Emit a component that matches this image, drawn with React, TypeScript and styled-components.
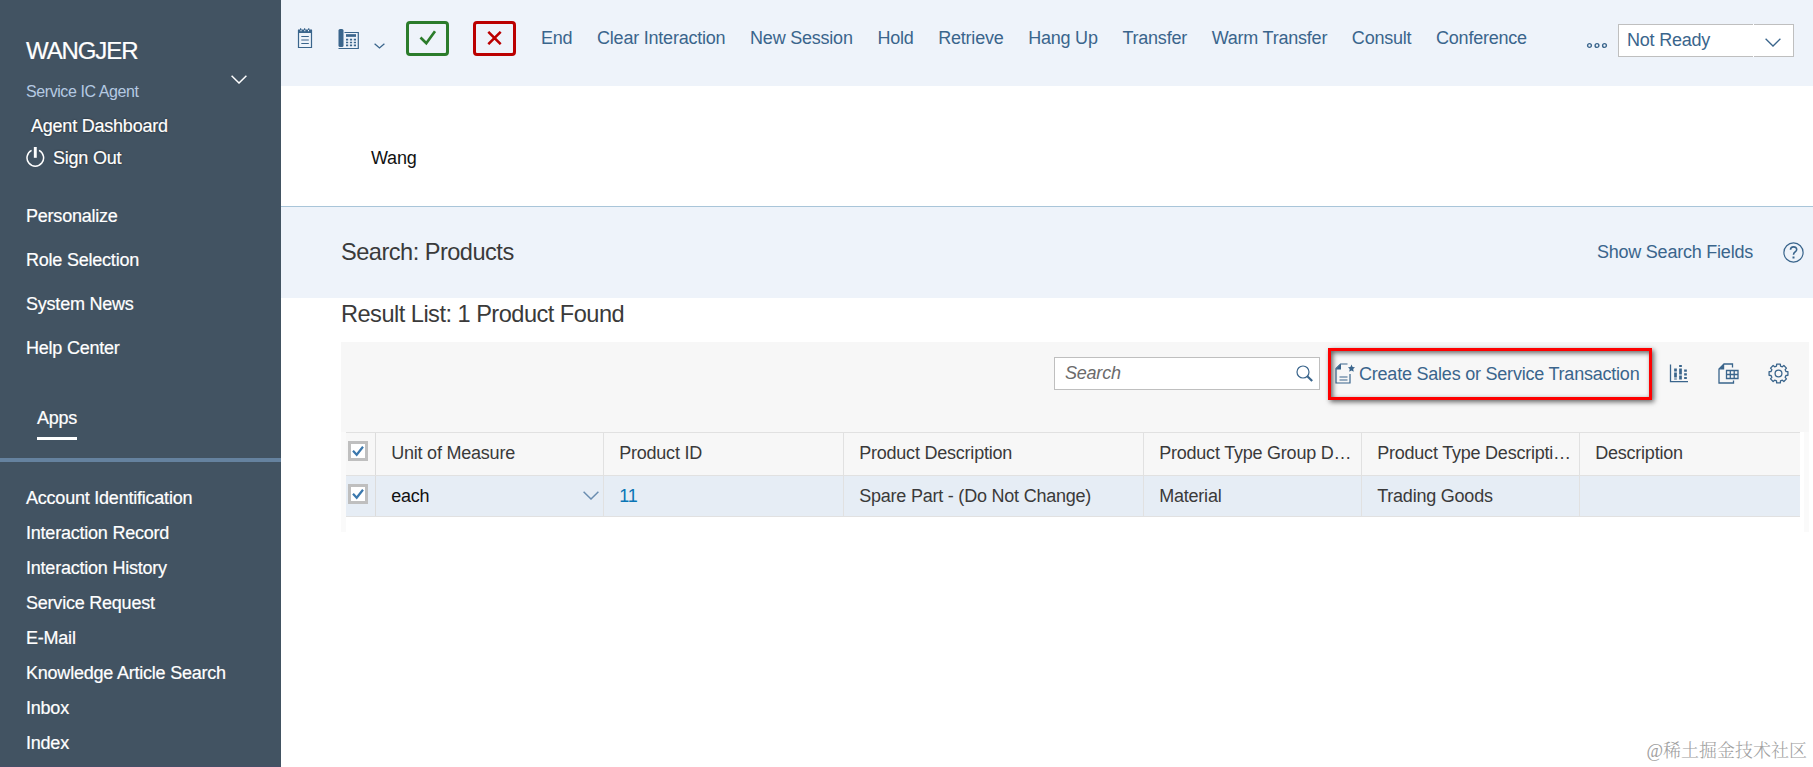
import React from "react";
import styled, { createGlobalStyle } from "styled-components";

const GlobalStyle = createGlobalStyle`
  * { box-sizing: border-box; }
  body {
    margin: 0;
    overflow: hidden;
    background: #fff;
    color: #3a3a3a;
    font: 18px "Liberation Sans", Arial, sans-serif;
    letter-spacing: -0.22px;
  }
  svg { display: block; flex: none; }
`;

const Page = styled.div`
  display: flex;
  width: 1813px;
  height: 767px;
  overflow: hidden;
`;

/* ---------- Sidebar ---------- */

const Sidebar = styled.aside`
  flex: none;
  width: 281px;
  height: 767px;
  display: flex;
  flex-direction: column;
  background: #425362;
  color: #fff;
  white-space: nowrap;
  -webkit-text-stroke: 0.2px currentColor;
  border-bottom: 1px solid #454f68;
`;

const Profile = styled.div`
  display: flex;
  justify-content: space-between;
  padding: 35px 34px 0 26px;
  height: 108px;
`;

const UserName = styled.div`
  font-size: 24px;
  letter-spacing: -1.1px;
  line-height: 31px;
  margin-bottom: 14px;
`;

const RoleName = styled.div`
  font-size: 16px;
  letter-spacing: -0.42px;
  line-height: 23px;
  color: #b5cae2;
  -webkit-text-stroke: 0;
`;

const ProfileToggle = styled.div`
  padding-top: 40px;
`;

const AccountLink = styled.a<{ $indent: number; $height: number }>`
  display: flex;
  align-items: center;
  gap: 7px;
  height: ${(p) => p.$height}px;
  padding-left: ${(p) => p.$indent}px;
  text-shadow: 0 0 2px rgba(0, 0, 0, 0.7);
`;

const PowerSlot = styled.span`
  padding-bottom: 3px;
`;

const MenuList = styled.nav`
  padding: 21px 0 0 26px;
`;

const MenuLink = styled.a<{ $height: number }>`
  display: block;
  height: ${(p) => p.$height}px;
  line-height: ${(p) => p.$height}px;
`;

const AppsTab = styled.div`
  align-self: flex-start;
  margin: 38px 0 18px 37px;
  height: 32px;
  line-height: 20px;
  border-bottom: 3px solid #fff;
`;

const AppsList = styled.nav`
  border-top: 4px solid #65829f;
  padding: 19px 0 0 26px;
`;

/* ---------- Main column ---------- */

const Main = styled.main`
  flex: 1;
  min-width: 0;
  white-space: nowrap;
`;

const TopBar = styled.header`
  display: flex;
  align-items: flex-start;
  height: 86px;
  background: #eef3fa;
  color: #3a658c;
`;

const IconGroup = styled.div`
  display: flex;
  padding: 28px 0 0 15px;
  width: 125px;
`;

const PhoneButton = styled.div`
  display: flex;
  margin-left: 25px;
  gap: 15px;
`;

const CallChevron = styled.div`
  padding-top: 15px;
`;

const CallButton = styled.button<{ $color: string }>`
  display: flex;
  align-items: center;
  justify-content: center;
  width: 43px;
  height: 35px;
  margin: 21px 24px 0 0;
  padding: 0 0 1px;
  background: transparent;
  border: 3px solid ${(p) => p.$color};
  border-radius: 4px;
  color: ${(p) => p.$color};
`;

const Actions = styled.div`
  display: flex;
  gap: 24.7px;
  line-height: 20px;
  padding: 28px 0 0 1px;
`;

const Overflow = styled.div`
  margin-left: auto;
  padding: 42px 10px 0 0;
`;

const StatusSelect = styled.div`
  display: flex;
  align-items: stretch;
  width: 176px;
  height: 33px;
  margin: 24px 19px 0 0;
  background: #fff;
`;

const StatusValue = styled.div`
  width: 135px;
  padding-left: 8px;
  line-height: 30px;
  border: 1px solid #bfbfbf;
  border-right: 0;
`;

const StatusArrow = styled.div`
  flex: 1;
  margin-left: 1px;
  padding: 13px 0 0 11px;
  border: 1px solid #bfbfbf;
  border-left: 0;
`;

const CustomerBar = styled.div`
  height: 120px;
  padding-left: 90px;
  line-height: 144px;
  color: #111;
`;

const SearchHeader = styled.section`
  display: flex;
  align-items: center;
  height: 92px;
  padding: 0 9px 1px 60px;
  background: #eef3fa;
  border-top: 1px solid #a9c5d9;
  color: #3a658c;
`;

const Title = styled.h1`
  margin: 0;
  font-size: 23.6px;
  letter-spacing: -0.52px;
  font-weight: 400;
  color: #3a3a3a;
`;

const ShowFields = styled.a`
  margin: 0 30px 0 auto;
`;

const ResultTitle = styled(Title)`
  height: 44px;
  line-height: 33px;
  padding-left: 60px;
`;

const ResultPanel = styled.section`
  width: 1468px;
  margin-left: 60px;
`;

const TableTools = styled.div`
  display: flex;
  align-items: flex-start;
  height: 90px;
  padding-left: 713px;
  background: #f7f7f7;
  color: #3a658c;
`;

const SearchBox = styled.div`
  display: flex;
  justify-content: space-between;
  width: 266px;
  height: 33px;
  margin-top: 15px;
  padding: 0 6px 0 10px;
  line-height: 30px;
  background: #fff;
  border: 1px solid #bfbfbf;
  font-style: italic;
  color: #6b6b6b;
  svg { margin-top: 7px; }
`;

const CreateButton = styled.div`
  position: relative;
  display: flex;
  align-items: center;
  gap: 4px;
  width: 324px;
  height: 52px;
  margin: 6px 17px 0 8px;
  padding-left: 7px;
  svg { margin-bottom: 2px; }
`;

const Highlight = styled.div`
  position: absolute;
  inset: 0;
  border: 3px solid #fe0000;
  box-shadow: 2px 2px 5px rgba(0, 0, 0, 0.6), inset 2px 2px 5px rgba(0, 0, 0, 0.6);
`;

const ToolIcons = styled.div`
  display: flex;
  gap: 29px;
  padding-top: 21px;
`;

const TableFrame = styled.div`
  height: 100px;
  padding-right: 4px;
  border-left: 5px solid #fafafa;
  border-right: 5px solid #fafafa;
`;

const Row = styled.div<{ $head?: boolean }>`
  display: grid;
  grid-template-columns: 30px 228px 240px 300px 218px 218px 1fr;
  width: 1454px;
  height: ${(p) => (p.$head ? 44 : 41)}px;
  background: ${(p) => (p.$head ? "#f7f7f7" : "#e6edf5")};
  border-top: ${(p) => (p.$head ? "1px solid #e1e1e1" : "0")};
  border-bottom: 1px solid #e1e1e1;
`;

const Cell = styled.div<{ $color?: string; $drop?: number }>`
  display: flex;
  align-items: center;
  justify-content: space-between;
  padding: ${(p) => p.$drop || 0}px 4px ${(p) => (p.$drop ? 0 : 1)}px 15.2px;
  border-right: 1px solid #e1e1e1;
  color: ${(p) => p.$color || "#3a3a3a"};
  &:last-child { border-right: 0; }
  svg { margin-bottom: 3px; }
`;

const CheckCell = styled.div`
  padding: 8px 0 0 2px;
  border-right: 1px solid #dcdcdc;
`;

const CheckBox = styled.div`
  width: 20px;
  height: 20px;
  border: 3px solid #bfbfbf;
  background: #fff;
`;

const Watermark = styled.div`
  position: absolute;
  right: 6px;
  bottom: 3px;
  font: 300 18px/26px "Liberation Serif", "Noto Serif CJK SC", "Noto Sans CJK SC", serif;
  letter-spacing: 0;
  color: #a0a0a0;
`;

/* ---------- Icons ---------- */

const Chevron = ({ w, h, sw = 1.5, color = "currentColor" }: { w: number; h: number; sw?: number; color?: string }) => (
  <svg width={w} height={h} fill="none" stroke={color} strokeWidth={sw}>
    <path d={`M.6 .8 L${w / 2} ${h - 1} L${w - 0.6} .8`} />
  </svg>
);

const PowerIcon = () => (
  <svg width="20" height="22" viewBox="0 0 20 22" fill="none" stroke="#fff" strokeWidth="1.5">
    <path d="M5.600 4.400a8.300 8.300 0 1 0 7.400 0" />
    <path d="M9.300 1v10.800" strokeWidth="2.900" />
  </svg>
);

const NotesIcon = () => (
  <svg width="17" height="21" viewBox="0 0 17 21" fill="none" stroke="currentColor" strokeWidth="1.200">
    <path d="M2.500 2v17.500h13V2" />
    <path d="M2 1.500h2V.3h1.200v1.200H8V.3h1.200v1.200h2.900V.3h1.200v1.200H16V5H2z" fill="currentColor" stroke="none" />
    <path d="M4.500 2.700h1M8.300 2.700h1M12 2.700h1" stroke="#eef3fa" />
    <path d="M5.300 8.500h7.500M5.300 12h7.500M5.300 15.500h7.500" />
  </svg>
);

const PhoneIcon = () => (
  <svg width="21" height="22" viewBox="0 0 21 22" fill="none" stroke="currentColor">
    <rect x=".5" y="1" width="5" height="18" rx="1.500" fill="currentColor" stroke="none" />
    <path d="M6.500 4.500H20.300V20.500H.5" strokeWidth="1.200" />
    <path d="M8 7.500h10" strokeWidth="2.700" />
    <path d="M8 11.700h10M8 14.500h10M8 17.300h10" strokeWidth="1.700" strokeDasharray="2.200 1.700" />
  </svg>
);

const AcceptIcon = () => (
  <svg width="18" height="16" viewBox="0 0 18 16" fill="none" stroke="currentColor" strokeWidth="2.700">
    <path d="M1.500 7.500l5.800 5.800L16 1.300" />
  </svg>
);

const RejectIcon = () => (
  <svg width="15" height="14" viewBox="0 0 15 14" fill="none" stroke="currentColor" strokeWidth="2.500">
    <path d="M1.300.8l12.400 12.400M13.700.8L1.300 13.200" />
  </svg>
);

const DotsIcon = () => (
  <svg width="22" height="7" viewBox="0 0 22 7" fill="none" stroke="currentColor" strokeWidth="1.400">
    <circle cx="3.500" cy="3.500" r="1.900" />
    <circle cx="11" cy="3.500" r="1.900" />
    <circle cx="18.500" cy="3.500" r="1.900" />
  </svg>
);

const HelpIcon = () => (
  <svg width="21" height="21" viewBox="0 0 21 21" fill="none" stroke="currentColor">
    <circle cx="10.500" cy="10.500" r="9.600" strokeWidth="1.200" />
    <path d="M7.500 7.800c0-4 6.200-3.800 6.200-.3 0 2.600-3.200 2.300-3.200 5.200" strokeWidth="1.600" />
    <path d="M9.500 14.500h2v2h-2z" fill="currentColor" stroke="none" />
  </svg>
);

const SearchIcon = () => (
  <svg width="17" height="17" viewBox="0 0 17 17" fill="none" stroke="#3a658c">
    <circle cx="7" cy="7" r="6" strokeWidth="1.200" />
    <path d="M11.300 11.300l4.900 4.700" strokeWidth="2.200" />
  </svg>
);

const CreateIcon = () => (
  <svg width="20" height="21" viewBox="0 0 20 21" fill="none" stroke="currentColor" strokeWidth="1.200">
    <path d="M12.500 1H5.500L1 5.500V20h14v-9" />
    <path d="M1 6.500L6 .8v5.700z" fill="currentColor" stroke="none" />
    <path d="M4.500 14h8M4.500 17h8" />
    <path d="M16.500 1.500l1.100 2.500 2.400.3-1.800 1.700.5 2.700-2.200-1.300-2.300 1.300.5-2.700-1.700-1.700 2.400-.3z" fill="currentColor" stroke="none" />
  </svg>
);

const ChartIcon = () => (
  <svg width="20" height="21" viewBox="0 0 20 21" fill="none" stroke="currentColor">
    <path d="M1.500 1.500v17.200h17.500" strokeWidth="1.300" />
    <path d="M6.500 5.500v11" strokeWidth="2.700" strokeDasharray="3 1 5 1 1" />
    <path d="M11.500 2v14.500" strokeWidth="2.700" strokeDasharray="2 1.500 6 1 4" />
    <path d="M16.500 6.500v10" strokeWidth="2.700" strokeDasharray="2.200 1.500" />
  </svg>
);

const ExportIcon = () => (
  <svg width="21" height="21" viewBox="0 0 21 21" fill="none" stroke="currentColor" strokeWidth="1.300">
    <path d="M14.500 4.500V1H6L1 6v14h14.500v-2.500" />
    <path d="M1 6.500L6.200.8v5.700z" fill="currentColor" stroke="none" />
    <path d="M8.500 7.500H20v8H8.500zM8.500 11.500H20M12.300 7.500v8M16.200 7.500v8" />
  </svg>
);

const gearPath = (() => {
  const points: string[] = [];
  for (let i = 0; i < 8; i++) {
    const at = (deg: number, r: number) => {
      const a = ((i * 45 + deg) * Math.PI) / 180;
      return `${(10.5 + r * Math.cos(a)).toFixed(2)} ${(10.5 + r * Math.sin(a)).toFixed(2)}`;
    };
    points.push(at(-11, 9.6), at(11, 9.6), at(15, 7.7), at(30, 7.7));
  }
  return `M${points.join("L")}Z`;
})();

const GearIcon = () => (
  <svg width="21" height="21" viewBox="0 0 21 21" fill="none" stroke="currentColor" strokeWidth="1.300" strokeLinejoin="round">
    <path d={gearPath} />
    <circle cx="10.500" cy="10.500" r="3.400" />
  </svg>
);

const Tick = () => (
  <svg width="14" height="14" viewBox="0 0 14 14" fill="none" stroke="#3b78ad" strokeWidth="2.200">
    <path d="M2 6.800l3.700 4L12 2.800" />
  </svg>
);

/* ---------- Data ---------- */

const menu = ["Personalize", "Role Selection", "System News", "Help Center"];
const apps = [
  "Account Identification",
  "Interaction Record",
  "Interaction History",
  "Service Request",
  "E-Mail",
  "Knowledge Article Search",
  "Inbox",
  "Index",
];
const actions = [
  "End",
  "Clear Interaction",
  "New Session",
  "Hold",
  "Retrieve",
  "Hang Up",
  "Transfer",
  "Warm Transfer",
  "Consult",
  "Conference",
];
const columns = [
  "Unit of Measure",
  "Product ID",
  "Product Description",
  "Product Type Group D…",
  "Product Type Descripti…",
  "Description",
];

export default function App() {
  return (
    <>
      <GlobalStyle />
      <Page>
        <Sidebar>
          <Profile>
            <div>
              <UserName>WANGJER</UserName>
              <RoleName>Service IC Agent</RoleName>
            </div>
            <ProfileToggle>
              <Chevron w={16} h={9} />
            </ProfileToggle>
          </Profile>
          <AccountLink $indent={31} $height={36}>Agent Dashboard</AccountLink>
          <AccountLink $indent={26} $height={29}>
            <PowerSlot><PowerIcon /></PowerSlot>
            Sign Out
          </AccountLink>
          <MenuList>
            {menu.map((label) => (
              <MenuLink key={label} $height={44}>{label}</MenuLink>
            ))}
          </MenuList>
          <AppsTab>Apps</AppsTab>
          <AppsList>
            {apps.map((label) => (
              <MenuLink key={label} $height={35}>{label}</MenuLink>
            ))}
          </AppsList>
        </Sidebar>

        <Main>
          <TopBar>
            <IconGroup>
              <NotesIcon />
              <PhoneButton>
                <PhoneIcon />
                <CallChevron>
                  <Chevron w={11} h={6} sw={1.3} />
                </CallChevron>
              </PhoneButton>
            </IconGroup>
            <CallButton $color="#2b7c2b"><AcceptIcon /></CallButton>
            <CallButton $color="#bb0000"><RejectIcon /></CallButton>
            <Actions>
              {actions.map((label) => (
                <span key={label}>{label}</span>
              ))}
            </Actions>
            <Overflow><DotsIcon /></Overflow>
            <StatusSelect>
              <StatusValue>Not Ready</StatusValue>
              <StatusArrow><Chevron w={16} h={9} sw={1.3} /></StatusArrow>
            </StatusSelect>
          </TopBar>

          <CustomerBar>Wang</CustomerBar>

          <SearchHeader>
            <Title>Search: Products</Title>
            <ShowFields>Show Search Fields</ShowFields>
            <HelpIcon />
          </SearchHeader>

          <ResultTitle as="h2">Result List: 1 Product Found</ResultTitle>

          <ResultPanel>
            <TableTools>
              <SearchBox>
                Search
                <SearchIcon />
              </SearchBox>
              <CreateButton>
                <CreateIcon />
                Create Sales or Service Transaction
                <Highlight />
              </CreateButton>
              <ToolIcons>
                <ChartIcon />
                <ExportIcon />
                <GearIcon />
              </ToolIcons>
            </TableTools>
            <TableFrame>
              <Row $head>
                <CheckCell><CheckBox><Tick /></CheckBox></CheckCell>
                {columns.map((label) => (
                  <Cell key={label}>{label}</Cell>
                ))}
              </Row>
              <Row>
                <CheckCell><CheckBox><Tick /></CheckBox></CheckCell>
                <Cell $drop={1} $color="#111">
                  each
                  <Chevron w={16} h={9} color="#6a8db0" />
                </Cell>
                <Cell $drop={1} $color="#0a75b5">11</Cell>
                <Cell $drop={1}>Spare Part - (Do Not Change)</Cell>
                <Cell $drop={1}>Material</Cell>
                <Cell $drop={1}>Trading Goods</Cell>
                <Cell />
              </Row>
            </TableFrame>
          </ResultPanel>
        </Main>
      </Page>
      <Watermark>@稀土掘金技术社区</Watermark>
    </>
  );
}
